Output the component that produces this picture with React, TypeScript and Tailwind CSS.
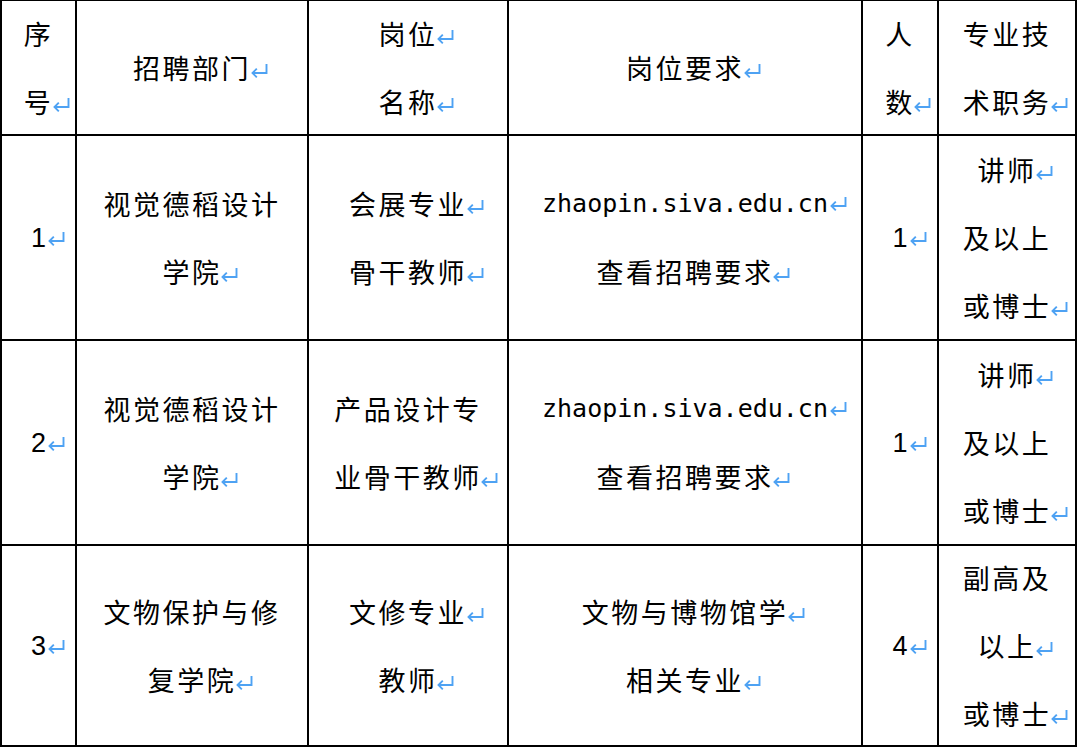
type Line = { t: string; m?: boolean; k?: "num" | "url" };

const cjk = "font-['Noto_Sans_CJK_SC','Noto_Sans',sans-serif] text-[27px] tracking-[2.5px]";
const num = "font-['Liberation_Sans',Arial,sans-serif] text-[27px]";
const url = "font-['DejaVu_Sans_Mono',monospace] text-[25px]";

// paragraph mark shown by the word processor, takes no width so text stays centred
const Mark = ({ tight }: { tight?: boolean }) => (
  <svg
    viewBox="0 0 19 15"
    className={`inline-block w-[19px] h-[15px] align-[1px] ${tight ? "-ml-[1.5px] -mr-[17.5px]" : "ml-[1px] -mr-[20px]"}`}
    fill="none"
    stroke="#4ea2f3"
    strokeWidth="1.9"
  >
    <path d="M16.5 1 V10 H2.5" />
    <path d="M6.8 5.7 L2.5 10 L6.8 14.3" />
  </svg>
);

const rows: { h: string; cells: Line[][] }[] = [
  {
    h: "h-[135px]",
    cells: [
      [{ t: "序" }, { t: "号", m: true }],
      [{ t: "招聘部门", m: true }],
      [{ t: "岗位", m: true }, { t: "名称", m: true }],
      [{ t: "岗位要求", m: true }],
      [{ t: "人" }, { t: "数", m: true }],
      [{ t: "专业技" }, { t: "术职务", m: true }],
    ],
  },
  {
    h: "h-[205px]",
    cells: [
      [{ t: "1", m: true, k: "num" }],
      [{ t: "视觉德稻设计" }, { t: "学院", m: true }],
      [{ t: "会展专业", m: true }, { t: "骨干教师", m: true }],
      [{ t: "zhaopin.siva.edu.cn", m: true, k: "url" }, { t: "查看招聘要求", m: true }],
      [{ t: "1", m: true, k: "num" }],
      [{ t: "讲师", m: true }, { t: "及以上" }, { t: "或博士", m: true }],
    ],
  },
  {
    h: "h-[205px]",
    cells: [
      [{ t: "2", m: true, k: "num" }],
      [{ t: "视觉德稻设计" }, { t: "学院", m: true }],
      [{ t: "产品设计专" }, { t: "业骨干教师", m: true }],
      [{ t: "zhaopin.siva.edu.cn", m: true, k: "url" }, { t: "查看招聘要求", m: true }],
      [{ t: "1", m: true, k: "num" }],
      [{ t: "讲师", m: true }, { t: "及以上" }, { t: "或博士", m: true }],
    ],
  },
  {
    h: "h-[201px]",
    cells: [
      [{ t: "3", m: true, k: "num" }],
      [{ t: "文物保护与修" }, { t: "复学院", m: true }],
      [{ t: "文修专业", m: true }, { t: "教师", m: true }],
      [{ t: "文物与博物馆学", m: true }, { t: "相关专业", m: true }],
      [{ t: "4", m: true, k: "num" }],
      [{ t: "副高及" }, { t: "以上", m: true }, { t: "或博士", m: true }],
    ],
  },
];

export default function App() {
  return (
    <div className="w-[1080px] h-[747px] overflow-hidden bg-white text-black">
      <div className="-mt-px w-[1077px] grid grid-cols-[75px_232px_200px_354px_76px_138px] border-l-2 border-t-2 border-black">
        {rows.map((row, ri) =>
          row.cells.map((lines, ci) => (
            <div
              key={ri + "-" + ci}
              className={`${row.h} flex flex-col items-center justify-center text-center border-r-2 border-b-2 border-black`}
            >
              {lines.map((l, li) => (
                <div
                  key={li}
                  className={`leading-[68px] whitespace-nowrap ${l.k === "num" ? num : l.k === "url" ? url : cjk}`}
                >
                  {l.t}
                  {l.m && <Mark tight={!l.k} />}
                </div>
              ))}
            </div>
          ))
        )}
      </div>
    </div>
  );
}
